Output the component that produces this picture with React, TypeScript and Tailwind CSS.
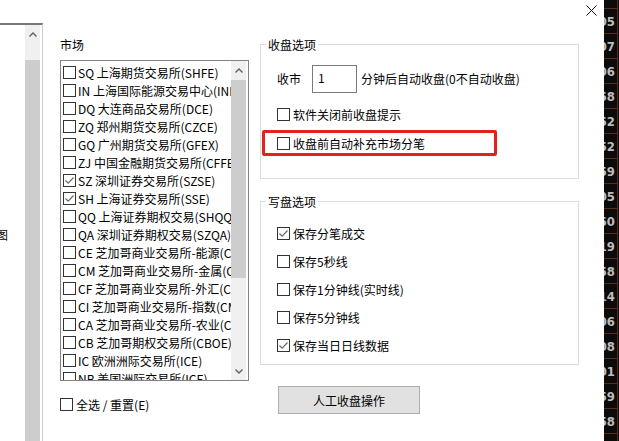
import React from 'react';

const markets: [string, boolean][] = [
  ['SQ 上海期货交易所(SHFE)', false],
  ['IN 上海国际能源交易中心(INE)', false],
  ['DQ 大连商品交易所(DCE)', false],
  ['ZQ 郑州期货交易所(CZCE)', false],
  ['GQ 广州期货交易所(GFEX)', false],
  ['ZJ 中国金融期货交易所(CFFEX)', false],
  ['SZ 深圳证券交易所(SZSE)', true],
  ['SH 上海证券交易所(SSE)', true],
  ['QQ 上海证券期权交易(SHQQ)', false],
  ['QA 深圳证券期权交易(SZQA)', false],
  ['CE 芝加哥商业交易所-能源(CME)', false],
  ['CM 芝加哥商业交易所-金属(CME)', false],
  ['CF 芝加哥商业交易所-外汇(CME)', false],
  ['CI 芝加哥商业交易所-指数(CME)', false],
  ['CA 芝加哥商业交易所-农业(CME)', false],
  ['CB 芝加哥期权交易所(CBOE)', false],
  ['IC 欧洲洲际交易所(ICE)', false],
  ['NB 美国洲际交易所(ICE)', false],
];

const writeOptions: [string, boolean][] = [
  ['保存分笔成交', true],
  ['保存5秒线', false],
  ['保存1分钟线(实时线)', false],
  ['保存5分钟线', false],
  ['保存当日日线数据', true],
];

const tape = ['05', '07', '06', '58', '52', '52', '59', '05', '50', '19', '58', '14', '06', '08', '01', '59', '58', '01'];

function Box({ checked }: { checked?: boolean }) {
  return (
    <span className="flex h-[13px] w-[13px] shrink-0 items-center justify-center border border-[#333333] bg-white">
      {checked && (
        <svg width="11" height="11" viewBox="0 0 11 11" className="block">
          <path d="M1.5 5.5 L4.2 8.2 L9.5 2.5" fill="none" stroke="#6a6a6a" strokeWidth="1.2" />
        </svg>
      )}
    </span>
  );
}

function Chevron({ down }: { down?: boolean }) {
  return (
    <svg width="8" height="5" viewBox="0 0 8 5" className="block">
      <path
        d={down ? 'M0.5 0.5 L4 4 L7.5 0.5' : 'M0.5 4.5 L4 1 L7.5 4.5'}
        fill="none"
        stroke="#606060"
        strokeWidth="1.4"
      />
    </svg>
  );
}

function CheckRow({ label, checked }: { label: string; checked?: boolean }) {
  return (
    <div className="flex items-center gap-[3px] leading-[17px]">
      <Box checked={checked} />
      <span className="whitespace-nowrap">{label}</span>
    </div>
  );
}

export default function App() {
  return (
    <div className="flex h-[441px] w-[619px] overflow-hidden bg-white font-['Noto_Sans_CJK_SC',sans-serif] text-[12px] text-black">
      {/* list behind the dialog */}
      <div className="flex w-[44px] shrink-0 flex-col pt-[23px]">
        <div className="flex w-[43px] flex-1 border-t-2 border-r border-t-[#767676] border-r-[#cfcfcf]">
          <div className="w-[25px] overflow-hidden">
            <div className="-ml-[4px] mt-[201px] leading-[17px]">图</div>
          </div>
          <div className="flex w-[15px] flex-col">
            <div className="flex h-[35px] justify-center bg-[#f0f0f0] pt-[7px]">
              <Chevron />
            </div>
            <div className="flex-1 bg-[#cdcdcd]" />
          </div>
        </div>
      </div>

      {/* market column */}
      <div className="flex w-[205px] shrink-0 flex-col pl-[16px] pt-[36px]">
        <div className="leading-[17px]">市场</div>
        <div className="mt-[7px] flex h-[321px] w-[189px] border border-[#828282]">
          <div className="flex-1 overflow-hidden pl-[2px] pt-[2px]">
            {markets.map(([name, on]) => (
              <div key={name} className="flex h-[18px] items-center gap-[2px]">
                <Box checked={on} />
                <span className="whitespace-nowrap leading-[17px]">{name}</span>
              </div>
            ))}
          </div>
          <div className="flex w-[15px] flex-col bg-[#f0f0f0]">
            <div className="flex h-[19px] items-center justify-center">
              <Chevron />
            </div>
            <div className="h-[198px] bg-[#cdcdcd]" />
            <div className="flex-1" />
            <div className="flex h-[18px] items-center justify-center">
              <Chevron down />
            </div>
          </div>
          <div className="w-[2px]" />
        </div>
        <div className="mt-[15px] flex items-center gap-[3px] leading-[17px]">
          <Box />
          <span>全选 / 重置(E)</span>
        </div>
      </div>

      {/* options column */}
      <div className="ml-[11px] flex w-[319px] shrink-0 flex-col pt-[36px]">
        <fieldset className="border border-[#dcdcdc] pb-[22px]">
          <legend className="ml-[5px] px-[2px] leading-[17px]">收盘选项</legend>
          <div className="mt-[12px] flex items-center pl-[16px]">
            <span className="mr-[11px]">收市</span>
            <div className="h-[28px] w-[45px] border border-[#7a7a7a] pl-[5px] pt-[3px] leading-[17px]">1</div>
            <span className="ml-[4px]">分钟后自动收盘(0不自动收盘)</span>
          </div>
          <div className="mt-[13px] pl-[16px]">
            <CheckRow label="软件关闭前收盘提示" />
          </div>
          <div className="ml-[1px] mt-[7px] flex h-[26px] w-[235px] items-center rounded-[2px] border-[3px] border-[#e2231c] pl-[12px]">
            <CheckRow label="收盘前自动补充市场分笔" />
          </div>
        </fieldset>

        <fieldset className="mt-[14px] border border-[#dcdcdc] pb-[5px]">
          <legend className="ml-[5px] px-[2px] leading-[17px]">写盘选项</legend>
          <div className="mt-[9px] pl-[16px]">
            {writeOptions.map(([label, on]) => (
              <div key={label} className="flex h-[28px] items-center">
                <CheckRow label={label} checked={on} />
              </div>
            ))}
          </div>
        </fieldset>

        <button
          type="button"
          className="ml-[18px] mt-[21px] h-[28px] w-[142px] border border-[#adadad] bg-[#e1e1e1] text-[12px] leading-[17px]"
        >
          人工收盘操作
        </button>
      </div>

      {/* close */}
      <div className="flex w-[25px] shrink-0 justify-center pt-[5px]">
        <svg width="11" height="11" viewBox="0 0 11 11" className="block">
          <path d="M0.5 0.5 L10.5 10.5 M10.5 0.5 L0.5 10.5" stroke="#111" strokeWidth="1" />
        </svg>
      </div>

      {/* quote tape */}
      <div className="flex w-[15px] shrink-0 bg-[#0b0b0b]">
        <div className="w-[13px] overflow-hidden pt-[8px]">
          {tape.map((v, i) => (
            <div
              key={i}
              className="flex h-[25px] items-center justify-end border-t border-[#5a2c1c] pr-[2px] font-['DejaVu_Sans_Condensed','DejaVu_Sans',sans-serif] text-[13px] font-bold leading-none text-[#bdbdbd]"
            >
              <span className="whitespace-nowrap">{v}</span>
            </div>
          ))}
        </div>
        <div className="w-[1px] bg-[#5a2c1c]" />
        <div className="w-[1px]" />
      </div>
    </div>
  );
}
